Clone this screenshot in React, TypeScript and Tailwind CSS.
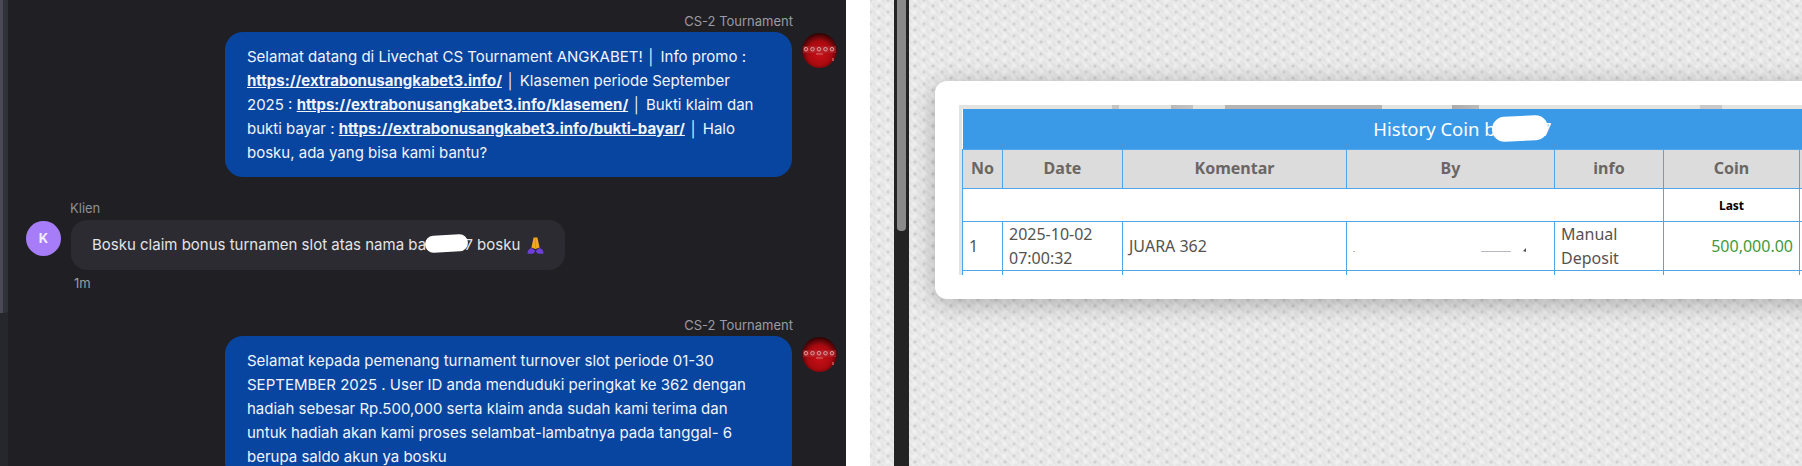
import React from "react";

function RedAvatar() {
  return (
    <svg width="35" height="35" viewBox="0 0 35 35" className="shrink-0 mt-px">
      <defs>
        <radialGradient id="redball" cx="50%" cy="58%" r="58%">
          <stop offset="0%" stopColor="#cc0f18" />
          <stop offset="60%" stopColor="#a80a10" />
          <stop offset="100%" stopColor="#2a0304" />
        </radialGradient>
      </defs>
      <circle cx="17.5" cy="17.5" r="17.5" fill="url(#redball)" />
      <rect x="1" y="13" width="33" height="7" fill="#b52a30" opacity="0.55" />
      {[4, 10.5, 17, 23.5, 30].map((x) => (
        <circle key={x} cx={x} cy="16.2" r="1.8" fill="#a83038" stroke="#e0a8a8" strokeWidth="0.9" />
      ))}
      <rect x="14" y="20.5" width="7" height="1" fill="#c77" />
      <rect x="30.5" y="25" width="1" height="3" fill="#e88" />
    </svg>
  );
}

function Pray() {
  return (
    <svg width="17" height="17" viewBox="0 0 17 17" className="block">
      <path d="M6.6 0.5 H10.4 L12.6 10.5 L8.5 12 L4.4 10.5 Z" fill="#f5a623" />
      <path d="M8.5 2 V11" stroke="#d98a12" strokeWidth="0.7" />
      <path d="M0.5 16.5 Q0.5 12 4.5 11 L8 13.5 Q8 16.5 5 16.8 H1.5 Z" fill="#6d3fd8" />
      <path d="M16.5 16.5 Q16.5 12 12.5 11 L9 13.5 Q9 16.5 12 16.8 H15.5 Z" fill="#6d3fd8" />
    </svg>
  );
}

const lnk = "font-bold underline";

function AgentMessage({ children }: { children: React.ReactNode }) {
  return (
    <div className="flex flex-col">
      <div className="pr-[53px] text-right text-[13px] leading-4 text-[#9b9ba1] mb-[3px]">CS-2 Tournament</div>
      <div className="flex justify-end gap-[10px] pr-[9px]">
        <div className="w-[567px] shrink-0 rounded-[18px] bg-[#0845a0] pl-[22px] pr-[34px] py-[12.5px] text-[15px] leading-[24px] text-[#f1f4fa]">
          {children}
        </div>
        <RedAvatar />
      </div>
    </div>
  );
}

const th = "border border-[#4fa5ea] bg-[#dcdcdc] text-[#6b6663] font-bold text-[16px] text-center pb-[2px]";
const td = "border border-[#4fa5ea] text-[#56524f] text-[16px] leading-[24px] px-[6px] py-0";

export default function App() {
  return (
    <div className="flex h-[466px] w-[1802px] overflow-hidden bg-white font-['Inter',sans-serif]">
      {/* chat */}
      <div className="flex h-full w-[846px] shrink-0 overflow-hidden bg-[#202024]">
        <div className="flex h-full w-[8px] shrink-0 flex-col bg-[#26272c]">
          <div className="flex h-[313px] rounded-br-[3px] bg-[#30323a]">
            <div className="h-full w-[3px] bg-[#4a4a56]" />
          </div>
        </div>
        <div className="flex min-w-0 flex-1 flex-col pt-[13px]">
          <AgentMessage>
            Selamat datang di Livechat CS Tournament ANGKABET! │ Info promo : <a className={lnk}>https://extrabonusangkabet3.info/</a> │ Klasemen periode September 2025 : <a className={lnk}>https://extrabonusangkabet3.info/klasemen/</a> │ Bukti klaim dan bukti bayar : <a className={lnk}>https://extrabonusangkabet3.info/bukti-bayar/</a> │ Halo bosku, ada yang bisa kami bantu?
          </AgentMessage>

          <div className="mt-[23px] flex flex-col pl-[18px]">
            <div className="pl-[44px] text-[13px] leading-4 text-[#8f8f96] mb-[4px]">Klien</div>
            <div className="flex items-start gap-[10px]">
              <div className="mt-px flex h-[35px] w-[35px] shrink-0 items-center justify-center rounded-full bg-[#a67cf8] text-[13px] font-bold text-[#f3edff]">K</div>
              <div className="flex h-[50px] items-center rounded-[16px] bg-[#2b2b31] pl-[21px] pr-[21px] text-[15px] text-[#e4e4e7] whitespace-nowrap">
                <span>Bosku claim bonus turnamen slot atas nama ba</span>
                <span className="relative inline-block w-[47px] text-right">
                  7
                  <span className="absolute left-[-1px] top-[1px] h-[17px] w-[43px] rotate-[-3deg] rounded-full bg-white" />
                </span>
                <span className="ml-[4px]">bosku</span>
                <span className="ml-[7px] flex"><Pray /></span>
              </div>
            </div>
            <div className="pl-[48px] pt-[5px] text-[13px] leading-4 text-[#9b9ba1]">1m</div>
          </div>

          <div className="mt-[26px]">
            <AgentMessage>
              Selamat kepada pemenang turnament turnover slot periode 01-30 SEPTEMBER 2025 . User ID anda menduduki peringkat ke 362 dengan hadiah sebesar Rp.500,000 serta klaim anda sudah kami terima dan untuk hadiah akan kami proses selambat-lambatnya pada tanggal- 6 berupa saldo akun ya bosku
            </AgentMessage>
          </div>
        </div>
      </div>

      {/* white gutter */}
      <div className="w-[24px] shrink-0 bg-white" />

      {/* textured page */}
      <div className="flex h-full min-w-0 flex-1 overflow-hidden bg-[#e4e4e4] bg-[radial-gradient(circle,#c4c4c4_0,#dcdcdc_1.5px,transparent_3px),radial-gradient(circle,#cacaca_0,#dedede_1.5px,transparent_3px),radial-gradient(circle,#f4f4f4_0,transparent_4px),repeating-linear-gradient(45deg,rgba(255,255,255,0.22)_0,rgba(255,255,255,0.22)_2px,transparent_2px,transparent_5px)] bg-[length:18px_12px,18px_12px,9px_6px,auto] bg-[position:0_0,9px_6px,4px_3px,0_0] pl-[24px]">
        <div className="h-full w-[15px] shrink-0 bg-[#232323] px-[3px]">
          <div className="h-[231px] w-[9px] rounded-b-[4px] bg-[#8a8a8a]" />
        </div>

        <div className="ml-[26px] mt-[81px] h-[218px] w-[1060px] shrink-0 rounded-[12px] bg-white p-[24px] shadow-[0_4px_24px_rgba(0,0,0,0.28)]">
          <div className="h-[170px] w-[1012px] overflow-hidden bg-[#e3e3e0] bg-[linear-gradient(90deg,transparent_153px,#c4c4c4_153px,#c4c4c4_160px,transparent_160px,transparent_212px,#b8b8b8_212px,#c4c4c4_234px,transparent_234px,transparent_266px,#b4b4b4_266px,#b4b4b4_423px,transparent_423px,transparent_493px,#aaa_493px,#bbb_520px,transparent_520px,transparent_741px,#c8c8c8_741px,#c8c8c8_763px,transparent_763px)] bg-[length:100%_4px] bg-no-repeat pl-[3px] pt-[4px] font-['Noto_Sans',sans-serif]">
            <table className="w-[1000px] table-fixed border-collapse bg-white">
              <colgroup>
                <col className="w-[40px]" />
                <col className="w-[120px]" />
                <col className="w-[224px]" />
                <col className="w-[208px]" />
                <col className="w-[109px]" />
                <col className="w-[136px]" />
                <col className="w-[163px]" />
              </colgroup>
              <tbody>
                <tr className="h-[40px]">
                  <td colSpan={7} className="bg-[#3a9ae8] p-0 text-center text-[18.5px] text-white">
                    <span className="inline-flex justify-center">
                      History Coin b
                      <span className="relative inline-block w-[56px] text-right">
                        7
                        <span className="absolute left-[-4px] top-[1px] h-[25px] w-[56px] rotate-[-3deg] rounded-full bg-white" />
                      </span>
                    </span>
                  </td>
                </tr>
                <tr className="h-[39px]">
                  <th className={th}>No</th>
                  <th className={th}>Date</th>
                  <th className={th}>Komentar</th>
                  <th className={th}>By</th>
                  <th className={th}>info</th>
                  <th className={th}>Coin</th>
                  <th className={th}></th>
                </tr>
                <tr className="h-[33px]">
                  <td colSpan={5} className={td}></td>
                  <td className="border border-[#4fa5ea] pt-[2px] text-center text-[12px] font-bold text-black">Last</td>
                  <td className={td}></td>
                </tr>
                <tr className="h-[48px]">
                  <td className={td}>1</td>
                  <td className={td}>2025-10-02 07:00:32</td>
                  <td className={td}>JUARA 362</td>
                  <td className={td}>
                    <svg width="175" height="6" viewBox="0 0 175 6" className="mt-[8px] block">
                      <rect x="0" y="4" width="2" height="1" fill="#c9b7a5" />
                      <rect x="128" y="4" width="30" height="1" fill="#b8b8c0" />
                      <path d="M170 4 L173 1 V5 Z" fill="#555" />
                    </svg>
                  </td>
                  <td className={td}>Manual Deposit</td>
                  <td className={`${td} text-right !text-[#3f9a3a]`}>500,000.00</td>
                  <td className={td}></td>
                </tr>
                <tr className="h-[48px]">
                  <td className={td}></td>
                  <td className={td}></td>
                  <td className={td}></td>
                  <td className={td}></td>
                  <td className={td}></td>
                  <td className={td}></td>
                  <td className={td}></td>
                </tr>
              </tbody>
            </table>
          </div>
        </div>
      </div>
    </div>
  );
}
